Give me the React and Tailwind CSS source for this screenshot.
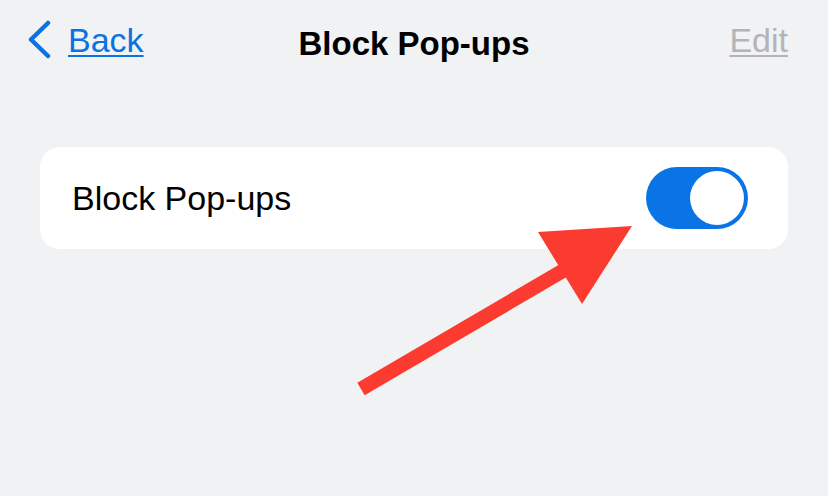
import React from "react";

const font = { fontFamily: '"Liberation Sans", Arial, sans-serif' };

const Chevron = () => (
  <svg width="24" height="40" viewBox="0 0 24 40" className="shrink-0">
    <polyline
      points="21,3 4,19.5 21,36"
      fill="none"
      stroke="#0b72e4"
      strokeWidth="4.5"
      strokeLinecap="round"
      strokeLinejoin="round"
    />
  </svg>
);

const Toggle = () => (
  <div className="w-[102px] h-[62px] rounded-full bg-[#0a74e6] p-[4px] flex justify-end">
    <div className="w-[54px] h-[54px] rounded-full bg-white" />
  </div>
);

const Arrow = () => (
  <svg
    className="absolute inset-0 pointer-events-none"
    width="828"
    height="496"
    viewBox="0 0 828 496"
  >
    <line x1="361" y1="389" x2="566" y2="269" stroke="#fc3b30" strokeWidth="14.5" />
    <polygon points="538,232 632,226 582,304" fill="#fc3b30" />
  </svg>
);

export default function App() {
  return (
    <div className="relative w-[828px] h-[496px] bg-[#f1f2f4] overflow-hidden" style={font}>
      <div className="grid grid-cols-3 items-center h-[80px] px-[27px]">
        <div className="flex items-center gap-[17px]">
          <Chevron />
          <span className="text-[34px] leading-none text-[#0b72e4] underline decoration-2 underline-offset-[3px]">
            Back
          </span>
        </div>
        <h1 className="text-center text-[33px] leading-none font-bold text-black mt-[6px] whitespace-nowrap">
          Block Pop-ups
        </h1>
        <div className="flex justify-end pr-[13px]">
          <span className="text-[34px] leading-none text-[#b4b4b8] underline decoration-2 underline-offset-[3px]">
            Edit
          </span>
        </div>
      </div>

      <div className="mx-[40px] mt-[67px] h-[102px] rounded-[20px] bg-white flex items-center justify-between pl-[32px] pr-[40px]">
        <span className="text-[34px] leading-none text-black">Block Pop-ups</span>
        <Toggle />
      </div>

      <Arrow />
    </div>
  );
}
